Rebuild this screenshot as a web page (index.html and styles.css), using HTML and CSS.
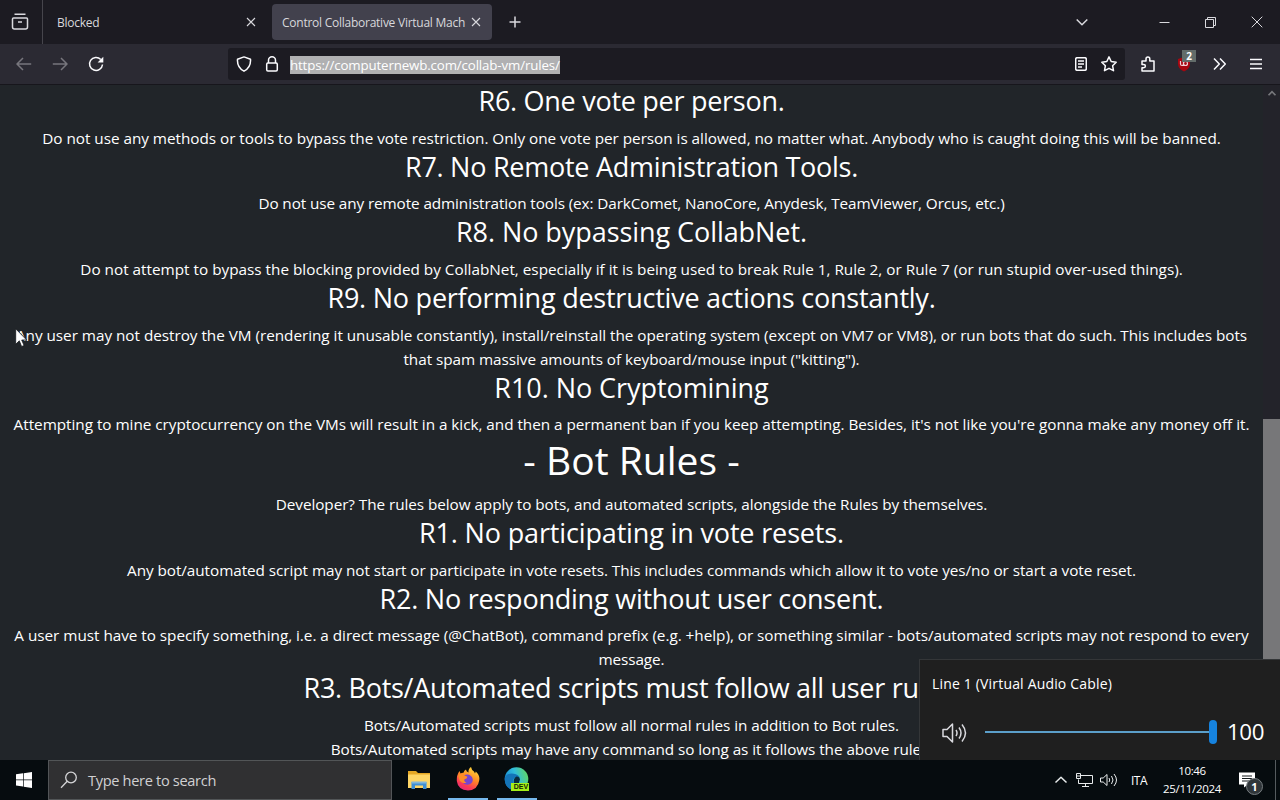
FILE: index.html
```html
<!DOCTYPE html>
<html lang="en">
<head>
<meta charset="utf-8">
<title>Control Collaborative Virtual Machines</title>
<link rel="stylesheet" href="styles.css">
</head>
<body>
<div class="screen">
  <header class="tabbar">
    <div class="view"><svg width="18" height="18" viewBox="0 0 18 18" class="ico"><path d="M3.500 1.200h11M2.500 5h13q1 0 1 1v8q0 2-2 2h-11q-2 0-2-2V6q0-1 1-1zM7 9h4"/></svg></div>
    <div class="tab first"><span>Blocked</span><svg width="10" height="10" viewBox="0 0 10 10" class="ico thin"><path d="M1 1l8 8M9 1l-8 8"/></svg></div>
    <div class="tab active"><span>Control Collaborative Virtual Mach</span><svg width="10" height="10" viewBox="0 0 10 10" class="ico thin"><path d="M1 1l8 8M9 1l-8 8"/></svg></div>
    <svg width="12" height="12" viewBox="0 0 12 12" class="ico plus"><path d="M6 .5v11M.5 6h11"/></svg>
    <div class="window-buttons">
      <svg width="12" height="12" viewBox="0 0 12 12" class="ico"><path d="M.7 3.500L6 8.700l5.300-5.200"/></svg>
      <svg width="11" height="11" viewBox="0 0 11 11" class="ico hair"><path d="M.5 5.500h10"/></svg>
      <svg width="11" height="11" viewBox="0 0 11 11" class="ico hair"><path d="M.5 2.500h8v8h-8zM2.500 2.500v-2h8v8h-2"/></svg>
      <svg width="12" height="12" viewBox="0 0 12 12" class="ico hair"><path d="M.7.7l10.600 10.600M11.300.7L.7 11.300"/></svg>
    </div>
  </header>
  <nav class="navbar">
    <div class="history">
      <svg width="16" height="16" viewBox="0 0 16 16" class="ico dim"><path d="M15.200 8H1.200M7 2L1 8l6 6"/></svg>
      <svg width="16" height="16" viewBox="0 0 16 16" class="ico dim"><path d="M.8 8h14M9 2l6 6-6 6"/></svg>
      <svg width="16" height="16" viewBox="0 0 16 16" class="ico bright"><path d="M12.800 3.500A6.500 6.500 0 1 0 14.500 8.500"/><path d="M15.300.8v5.700H9.600z" fill="#fbfbfe" stroke="none"/></svg>
    </div>
    <div class="urlbar">
      <svg width="16" height="16" viewBox="0 0 16 16" class="ico bright"><path d="M8 .9l6.500 2.300q.6 8-6.500 12Q.9 11.200 1.500 3.200z"/></svg>
      <svg width="14" height="16" viewBox="0 0 14 16" class="ico bright"><rect x="1.700" y="7" width="10.600" height="8" rx="1.200"/><path d="M3.500 7V4.300a3.500 3.500 0 0 1 7 0V7"/></svg>
      <span class="url">https://computernewb.com/collab-vm/rules/</span>
      <svg width="12" height="14" viewBox="0 0 12 14" class="ico bright reader"><rect x=".7" y=".7" width="10.600" height="12.600" rx="1.500"/><path d="M3 4h6M3 7h6M3 10h4"/></svg>
      <svg width="16" height="16" viewBox="0 0 16 16" class="ico bright"><path d="M8 .9l2.200 4.600 5 .7-3.600 3.500.9 5L8 12.300l-4.500 2.400.9-5L.8 6.200l5-.7z"/></svg>
    </div>
    <div class="tools">
      <svg width="16" height="16" viewBox="0 0 16 16" class="ico bright"><path d="M2 5h4V3a1.900 1.900 0 0 1 3.800 0v2H14v10H2v-3.200h1.700a1.700 1.700 0 0 0 0-3.400H2z"/></svg>
      <span class="blocker"><svg width="16" height="16" viewBox="0 0 16 16"><path d="M8 1l6 2v5q0 5-6 7.500Q2 13 2 8V3z" fill="#a80711"/><path d="M4.500 5v3q0 1.500 1.500 1.500T7.500 8V5M7.500 7.500a2 2 0 1 0 4 0 2 2 0 1 0-4 0" fill="none" stroke="#f0cfd4" stroke-width="1.200"/></svg><b>2</b></span>
      <svg width="14" height="14" viewBox="0 0 14 14" class="ico bright"><path d="M1 1.500L6.300 7 1 12.500M7 1.500L12.300 7 7 12.500"/></svg>
      <svg width="12" height="12" viewBox="0 0 12 12" class="ico bright"><path d="M0 1.500h12M0 6h12M0 10.500h12"/></svg>
    </div>
  </nav>
  <div class="viewport">
    <main class="rules">
      <h3 class="s28">R6. One vote per person.</h3>
      <p class="s3">Do not use any methods or tools to bypass the vote restriction. Only one vote per person is allowed, no matter what. Anybody who is caught doing this will be banned.</p>
      <h3 class="s27">R7. No Remote Administration Tools.</h3>
      <p class="s10">Do not use any remote administration tools (ex: DarkComet, NanoCore, Anydesk, TeamViewer, Orcus, etc.)</p>
      <h3 class="s6">R8. No bypassing CollabNet.</h3>
      <p>Do not attempt to bypass the blocking provided by CollabNet, especially if it is being used to break Rule 1, Rule 2, or Rule 7 (or run stupid over-used things).</p>
      <h3 class="s24">R9. No performing destructive actions constantly.</h3>
      <p class="s3">Any user may not destroy the VM (rendering it unusable constantly), install/reinstall the operating system (except on VM7 or VM8), or run bots that do such. This includes bots</p>
      <p class="s5">that spam massive amounts of keyboard/mouse input ("kitting").</p>
      <h3 class="s6">R10. No Cryptomining</h3>
      <p class="s3">Attempting to mine cryptocurrency on the VMs will result in a kick, and then a permanent ban if you keep attempting. Besides, it's not like you're gonna make any money off it.</p>
      <h1>- Bot Rules -</h1>
      <p class="s6">Developer? The rules below apply to bots, and automated scripts, alongside the Rules by themselves.</p>
      <h3 class="s15">R1. No participating in vote resets.</h3>
      <p class="s6">Any bot/automated script may not start or participate in vote resets. This includes commands which allow it to vote yes/no or start a vote reset.</p>
      <h3 class="s23">R2. No responding without user consent.</h3>
      <p class="s3">A user must have to specify something, i.e. a direct message (@ChatBot), command prefix (e.g. +help), or something similar - bots/automated scripts may not respond to every</p>
      <p class="s10">message.</p>
      <h3 class="s29">R3. Bots/Automated scripts must follow all user rules.</h3>
      <p class="s8">Bots/Automated scripts must follow all normal rules in addition to Bot rules.</p>
      <p class="s6">Bots/Automated scripts may have any command so long as it follows the above rules.</p>
    </main>
    <div class="scrollbar"><svg width="10" height="7" viewBox="0 0 8 6"><path d="M1 4.500l3-3 3 3" fill="none" stroke="#76777b" stroke-width="1.500"/></svg><i></i></div>
  </div>
  <footer class="taskbar">
    <div class="start"><svg width="16" height="16" viewBox="0 0 16 16"><path d="M0 2.300L7 1.300v6.200H0zM7.700 1.200L16 0v7.500H7.700zM0 8.300h7v6.300l-7-1zM7.700 8.300H16V16l-8.300-1.200z" fill="#fff"/></svg></div>
    <div class="search"><svg width="18" height="18" viewBox="0 0 18 18"><circle cx="11" cy="6.500" r="5.300"/><path d="M7.200 10.300L1 16.700"/></svg><span>Type here to search</span></div>
    <div class="apps">
      <div class="app"><svg width="22" height="20" viewBox="0 0 22 20"><path d="M0 1h8l2 2h12v15H0z" fill="#e5a825"/><path d="M0 4.500h22V18H0z" fill="#fed666"/><path d="M3.500 19v-7h15v7h-3.500v-3.500H7V19z" fill="#3f8fd5"/><path d="M3.500 11.500h15v2h-15z" fill="#82b7d9"/></svg></div>
      <div class="app open"><svg width="24" height="24" viewBox="0 0 24 24"><defs><linearGradient id="fire" x1=".8" y1="0" x2=".3" y2="1"><stop offset="0" stop-color="#ffe13f"/><stop offset=".45" stop-color="#ff8b25"/><stop offset=".8" stop-color="#fa3857"/><stop offset="1" stop-color="#e32b7a"/></linearGradient></defs><path d="M3.500 4l1 2.500Q6 5.500 7.500 5.700 8 3.500 10 2.500q0 2 2.500 3Q12 2 15 0q.5 3 3 4.500l1 2 .8-2Q24 8.500 23.300 13 22 23 12 23.500 2 23 .8 14 .5 8 3.500 4z" fill="url(#fire)"/><path d="M8 8.500q3.500-2 7 .5 3 3 1 6.500-3 3.500-7.500 1.500-3-2-2.500-5 1 1 2.500.5 1.500-1 2.500-1.500-1-1.500-3-2.500z" fill="#7744cf"/><path d="M2 8q3-2.500 6 .2l3.500 1.600q-.5 1.700-3 2.200-1 2.500 2 3.500-4 1.500-6.500-1.500Q2.500 11 2 8z" fill="#ff8d27"/></svg></div>
      <div class="app open edge"><svg width="26" height="25" viewBox="0 0 26 25"><defs><linearGradient id="sea" x1="0" y1=".6" x2="1" y2=".3"><stop offset="0" stop-color="#168bd7"/><stop offset=".5" stop-color="#31bdda"/><stop offset="1" stop-color="#60d563"/></linearGradient></defs><circle cx="12.500" cy="12" r="11.800" fill="url(#sea)"/><path d="M.7 12Q1 6.500 8 6.500q7 .5 8 5-1-1.500-3.500-1.500-4 1-3 5.500 1 5 6 7Q1 25 .7 12z" fill="#1474b8"/><path d="M12.500 9.500q3 0 3.500 3-1 2-1 3.500H10q-1-5 2.500-6.500z" fill="#092a3c"/><rect x="7" y="16" width="18" height="8" fill="#a5ef18"/></svg><b>DEV</b></div>
    </div>
    <div class="tray">
      <svg width="14" height="8" viewBox="0 0 14 8" class="ico up"><path d="M1.500 6.500L7 1.300l5.500 5.200"/></svg>
      <svg width="17" height="14" viewBox="0 0 17 14" class="ico hair net"><path d="M4.500 2.500h12v8h-14v-4M.5.500h4v5h-4zM.5 3h4M9.500 10.500v3M6 13.500h7"/></svg>
      <svg width="18" height="14" viewBox="0 0 18 14" class="ico hair vol"><path d="M.5 5h2.700L7 1.500v11L3.200 9H.5zM9 5q1.500 2 0 4M11.500 3q3 4 0 8M14 1q5 6 0 12"/></svg>
      <span class="lang">ITA</span>
      <div class="clock"><span>10:46</span><span>25/11/2024</span></div>
      <div class="notes"><svg width="16" height="16" viewBox="0 0 16 16"><path d="M0 .5h16v12H9l-4 3v-3H0z" fill="#fff"/><path d="M3 4h10M3 6.500h10M3 9h7" stroke="#111719" stroke-width="1"/></svg><b>1</b></div>
      <i class="desktop"></i>
    </div>
  </footer>
  <aside class="volume">
    <div class="device">Line 1 (Virtual Audio Cable)</div>
    <div class="level">
      <svg width="26" height="22" viewBox="0 0 26 22" class="ico"><path d="M1 7.500h4L10.500 2v18L5 14.500H1zM14 8q2 3 0 6M17 5.500q4 5.500 0 11M20 2.500q7 8.500 0 17"/></svg>
      <div class="slider"><i></i></div>
      <span class="amount">100</span>
    </div>
  </aside>
  <svg class="cursor" width="13" height="20" viewBox="0 0 13 20"><path d="M.7.800v15.500l3.600-3.500 2.300 5.700 2.500-1-2.400-5.500h5z" fill="#fff" stroke="#15191d" stroke-width=".8"/></svg>
</div>
</body>
</html>
```
FILE: styles.css
```css
* { box-sizing: border-box; }
body { margin: 0; font-family: "Open Sans", "Noto Sans", sans-serif; color: #fff; background: #212529; }
svg { display: block; flex: none; }
.screen { position: relative; width: 1280px; height: 800px; overflow: hidden; display: flex; flex-direction: column; white-space: nowrap; }

/* Icons */
.ico { fill: none; stroke: #d9d9de; stroke-width: 1.5; stroke-linejoin: round; }
.ico.thin { stroke-width: 1.1; }
.ico.hair { stroke-width: 1; stroke-linejoin: miter; }
.ico.dim { stroke: #77767d; }
.ico.bright { stroke: #fbfbfe; }

/* Browser tabs */
.tabbar { height: 44px; background: #1c1b22; display: flex; align-items: center; flex: none; }
.view { width: 43px; height: 44px; border-right: 1px solid #46454c; display: flex; align-items: center; padding-left: 11px; }
.tab { display: flex; align-items: center; justify-content: space-between; height: 36px; font-size: 12px; letter-spacing: -.25px; color: #d8d8dc; }
.tab.first { width: 229px; padding: 0 16px 0 14px; }
.tab.active { width: 220px; padding: 0 11px 0 10px; background: #42414d; border-radius: 4px; }
.plus { margin-left: 17px; }
.window-buttons { margin-left: auto; display: flex; align-items: center; padding-right: 17px; gap: 35px; }
.window-buttons svg:first-child { margin: 0 36px 0 0; }

/* Address bar */
.navbar { height: 41px; background: #2b2a33; border-bottom: 1px solid #17161c; display: flex; align-items: center; flex: none; }
.history { width: 228px; padding-left: 16px; display: flex; gap: 20px; }
.urlbar { width: 897px; height: 32px; background: #1c1b22; border-radius: 3px; display: flex; align-items: center; padding: 0 8px; }
.urlbar svg:nth-child(2) { margin-left: 13px; }
.url { margin: 1px 0 0 11px; width: 270px; height: 18px; line-height: 19px; background: #b0b0b2; font-size: 13.3px; letter-spacing: -.14px; }
.reader { margin: 0 14px 0 auto; }
.tools { flex: 1; display: flex; align-items: center; padding-left: 15px; }
.blocker { position: relative; margin: 0 21px 0 20px; }
.blocker b { position: absolute; left: 6px; top: -6px; width: 14px; height: 12px; background: #626c6a; font-size: 10px; line-height: 12px; text-align: center; }
.tools svg:last-child { margin-left: 23px; }

/* Page */
.viewport { height: 675px; display: flex; flex: none; background: #212529; }
.rules { width: 1263px; text-align: center; margin-top: -.8px; }
.rules h1, .rules h3 { margin: 0; font-weight: 400; }
.rules h3 { font-size: 27px; line-height: 33.6px; height: 41.2px; margin-bottom: .4px; }
.rules h1 { font-size: 39px; line-height: 48px; height: 56px; }
.rules p { margin: 0; font-size: 15.3px; line-height: 24px; height: 24px; }
.s3 { letter-spacing: -.031px; }
.s5 { letter-spacing: -.05px; }
.s6 { letter-spacing: -.061px; }
.s8 { letter-spacing: -.077px; }
.s10 { letter-spacing: -.103px; }
.s15 { letter-spacing: -.152px; }
.s23 { letter-spacing: -.225px; }
.s24 { letter-spacing: -.237px; }
.s27 { letter-spacing: -.267px; }
.s28 { letter-spacing: -.279px; }
.s29 { letter-spacing: -.293px; }
.scrollbar { width: 17px; background: #23232a; padding-top: 5px; display: flex; flex-direction: column; align-items: center; }
.scrollbar i { width: 17px; height: 341px; background: #777779; margin-top: 322px; }

/* Taskbar */
.taskbar { height: 40px; background: #060c0f; display: flex; flex: none; }
.start { width: 48px; display: flex; align-items: center; justify-content: center; }
.search { width: 344px; background: #303032; border: 1px solid #525557; display: flex; align-items: center; padding-left: 11px; gap: 10px; font-size: 14.6px; letter-spacing: -.33px; color: #d0d0d2; }
.search svg { fill: none; stroke: #d5d5d7; stroke-width: 1.3; }
.apps { display: flex; padding-left: 7px; gap: 9px; }
.app { width: 40px; display: flex; align-items: center; justify-content: center; position: relative; }
.app.open { border-bottom: 2px solid #76b9ed; }
.edge b { position: absolute; left: 15px; top: 23px; width: 18px; height: 8px; font: bold 7px/8px "Liberation Sans", sans-serif; color: #172104; text-align: center; }
.tray { margin-left: auto; display: flex; align-items: center; width: 226px; }
.tray .ico { stroke: #e9eced; }
.net { margin-left: 8px; }
.vol { margin-left: 7px; }
.lang { margin-left: 13px; font-size: 12px; letter-spacing: -.5px; width: 32px; }
.clock { width: 58px; display: flex; flex-direction: column; align-items: center; font-size: 11.5px; line-height: 18px; letter-spacing: -.32px; }
.notes { position: relative; margin-left: 18px; }
.notes b { position: absolute; left: 7px; top: 6px; width: 17px; height: 17px; border-radius: 50%; background: #30363a; border: 1px solid #777d80; font: bold 11px/15px "Open Sans", sans-serif; text-align: center; }
.desktop { width: 1px; height: 40px; background: #555b5e; margin: 0 4px 0 auto; }

/* Volume flyout */
.volume { position: absolute; left: 919px; top: 659px; width: 361px; height: 101px; background: #1f1f1f; border: 1px solid #343638; border-right: 0; border-bottom: 0; padding: 14px 0 0 12px; }
.device { font-size: 14px; line-height: 20px; letter-spacing: .175px; }
.level { display: flex; align-items: center; height: 36px; margin-top: 20px; padding-left: 10px; }
.level .ico { margin-top: 2px; }
.slider { width: 232px; height: 24px; margin-left: 17px; display: flex; align-items: center; justify-content: flex-end; background: linear-gradient(#5b9fca, #5b9fca) 0 11px / 228px 2px no-repeat; }
.slider i { width: 8px; height: 24px; border-radius: 4px; background: #1683df; }
.amount { margin: -2px 0 0 10px; font-size: 22.3px; letter-spacing: -.4px; }
.cursor { position: absolute; left: 15px; top: 328px; }
```
